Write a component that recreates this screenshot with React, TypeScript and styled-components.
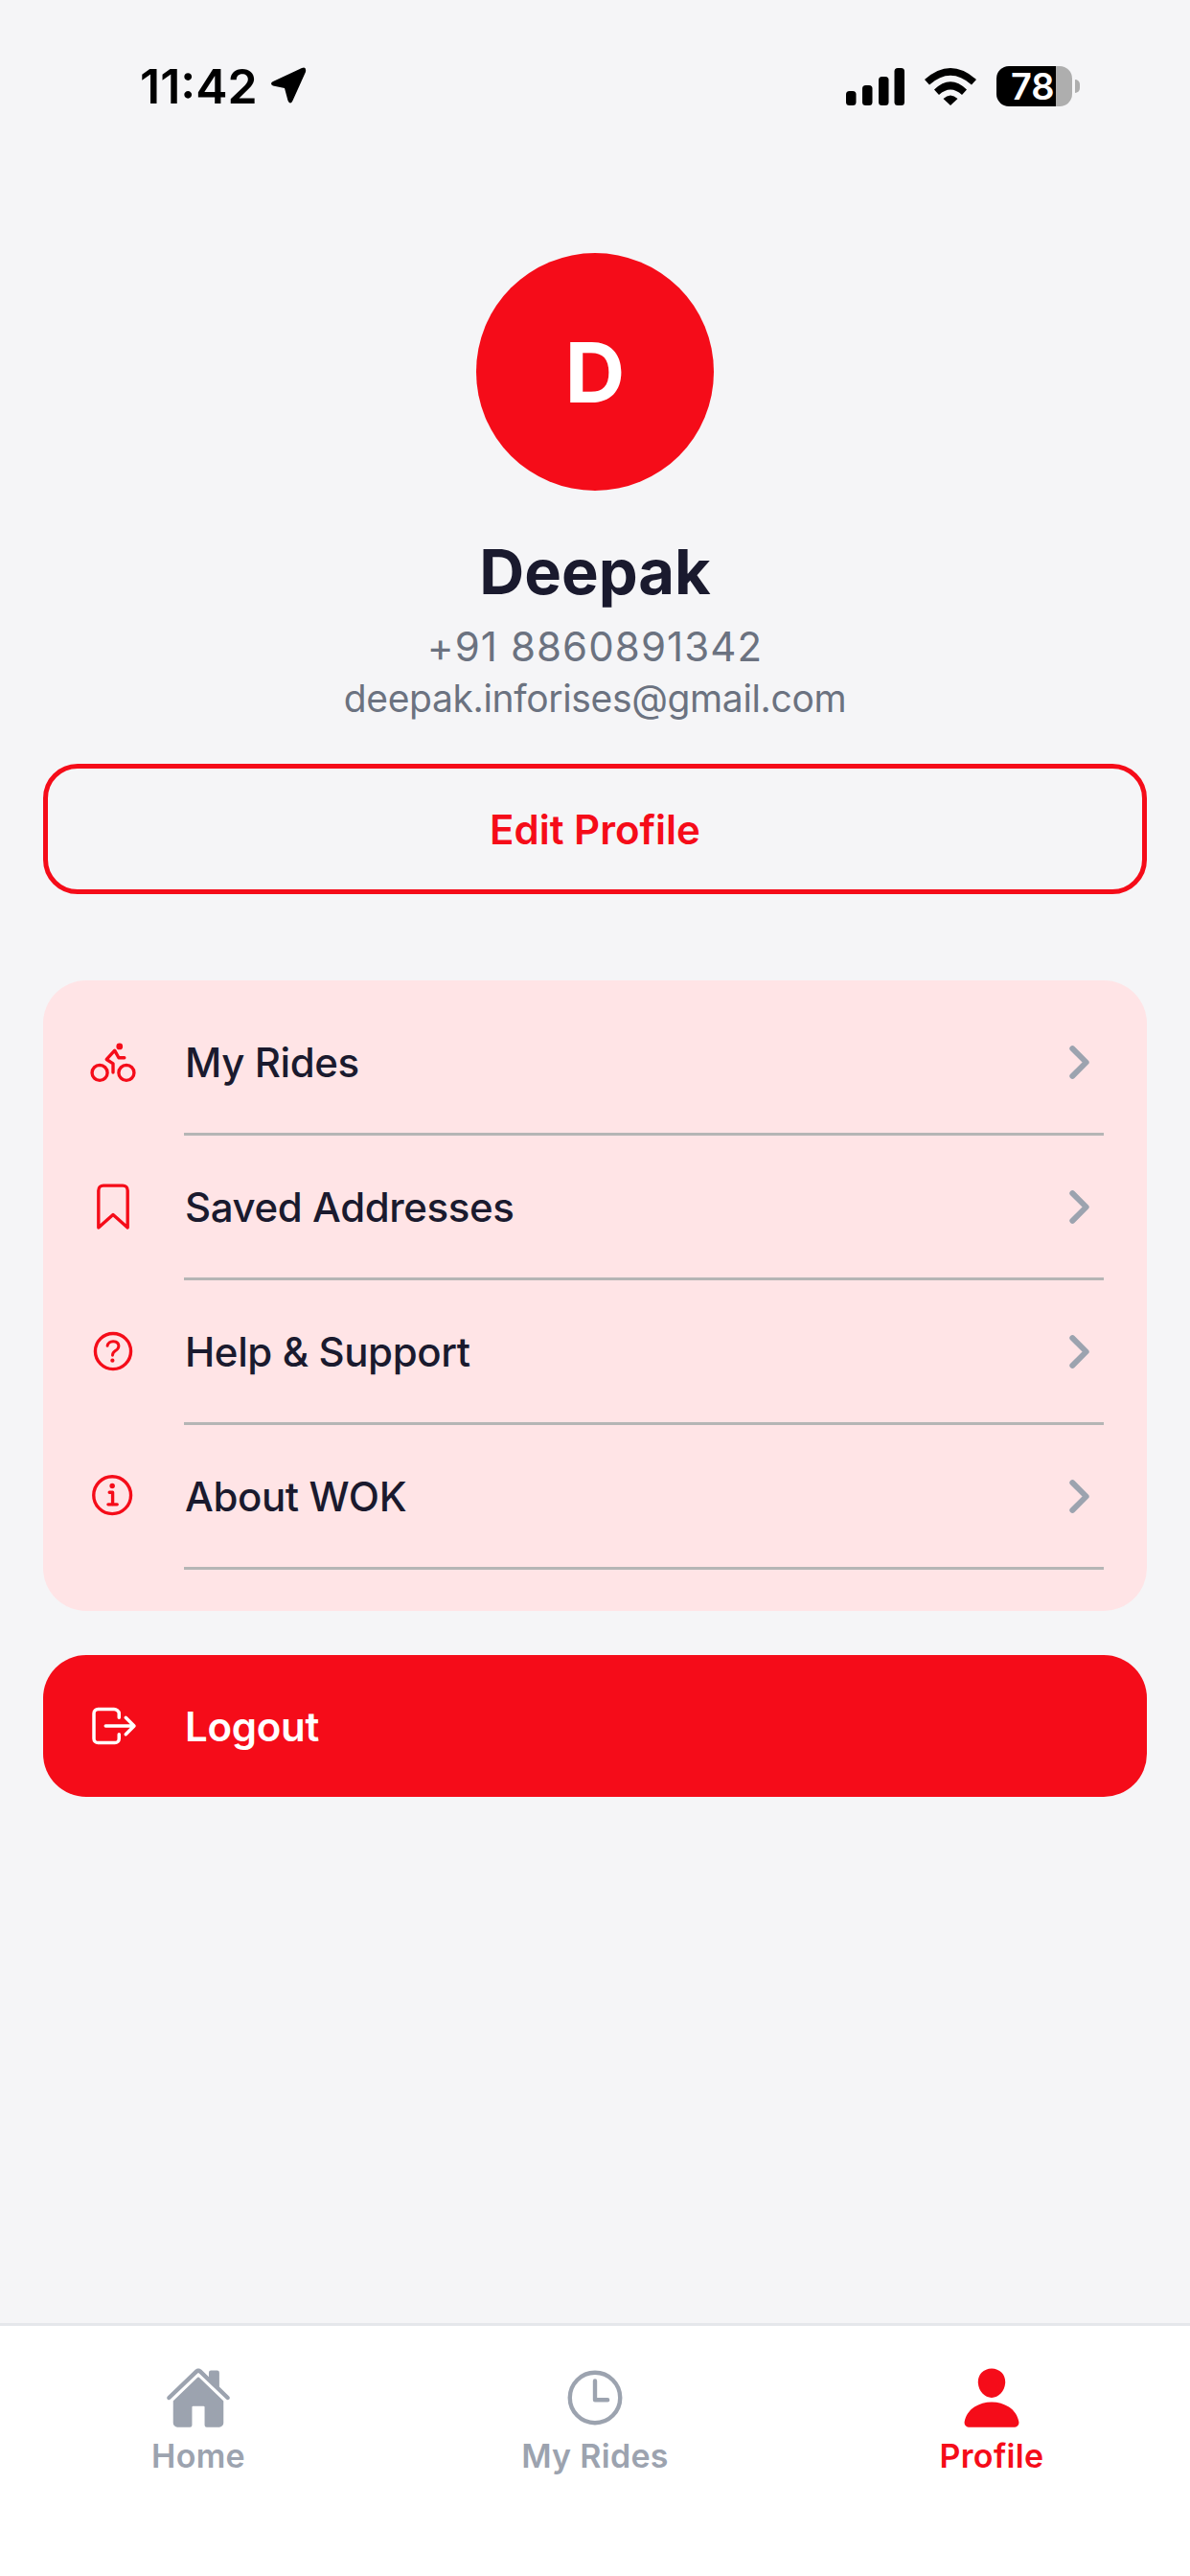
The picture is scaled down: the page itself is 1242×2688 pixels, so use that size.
import styled, { createGlobalStyle } from "styled-components";
import {
  IoBicycleOutline,
  IoBookmarkOutline,
  IoChevronForward,
  IoHelpCircleOutline,
  IoHome,
  IoInformationCircleOutline,
  IoLogOutOutline,
  IoPerson,
  IoTimeOutline,
} from "react-icons/io5";

const RED = "#f50c19";
const INK = "#1a1a2e";

const GlobalStyle = createGlobalStyle`
  html, body {
    margin: 0;
    padding: 0;
    background: #f5f5f7;
    font-family: Inter, "Liberation Sans", sans-serif;
  }
  * { box-sizing: border-box; }
`;

const menuItems = [
  { label: "My Rides", icon: <IoBicycleOutline /> },
  { label: "Saved Addresses", icon: <IoBookmarkOutline /> },
  { label: "Help & Support", icon: <IoHelpCircleOutline /> },
  { label: "About WOK", icon: <IoInformationCircleOutline /> },
];

export default function App() {
  return (
    <Screen>
      <GlobalStyle />
      <StatusBar>
        <TimeGroup>
          <Clock>11:42</Clock>
          <svg width="40" height="42" viewBox="0 0 40 42">
            <path
              d="M3 16 L33 2 Q38 0 37 6 L23.5 36 Q21 41 18.5 36 L15 23 L3 20.5 Q-1 18 3 16 Z"
              fill="#000"
            />
          </svg>
        </TimeGroup>
        <StatusIcons>
          <svg width="61" height="39" viewBox="0 0 61 39">
            <rect x="0" y="24" width="10.5" height="15" rx="3.5" fill="#000" />
            <rect x="17" y="18" width="10.5" height="21" rx="3.5" fill="#000" />
            <rect x="34" y="9" width="10.5" height="30" rx="3.5" fill="#000" />
            <rect x="50.5" y="0" width="10.5" height="39" rx="3.5" fill="#000" />
          </svg>
          <svg width="54" height="40" viewBox="0 0 54 40">
            <path d="M0 13 Q27 -11 54 13 L49 18.5 Q27 -1 5 18.5 Z" fill="#000" />
            <path d="M10 23.5 Q27 7 44 23.5 L39 29 Q27 18 15 29 Z" fill="#000" />
            <path d="M19.5 33 Q27 26 34.5 33 L27 40 Z" fill="#000" />
          </svg>
          <Battery>
            <BatteryBody>78</BatteryBody>
            <BatteryNub />
          </Battery>
        </StatusIcons>
      </StatusBar>

      <Content>
        <ProfileHead>
          <Avatar>D</Avatar>
          <Name>Deepak</Name>
          <Phone>+91 8860891342</Phone>
          <Email>deepak.inforises@gmail.com</Email>
        </ProfileHead>

        <EditButton>Edit Profile</EditButton>

        <MenuCard>
          {menuItems.map((item) => (
            <MenuRow key={item.label}>
              <MenuIcon>{item.icon}</MenuIcon>
              <MenuBody>
                <MenuLabel>{item.label}</MenuLabel>
                <Chevron>
                  <IoChevronForward />
                </Chevron>
              </MenuBody>
            </MenuRow>
          ))}
        </MenuCard>

        <LogoutButton>
          <LogoutIcon>
            <IoLogOutOutline />
          </LogoutIcon>
          <LogoutLabel>Logout</LogoutLabel>
        </LogoutButton>
      </Content>

      <TabBar>
        <Tab>
          <TabIcon>
            <IoHome />
          </TabIcon>
          <TabLabel>Home</TabLabel>
        </Tab>
        <Tab>
          <TabIcon>
            <IoTimeOutline />
          </TabIcon>
          <TabLabel>My Rides</TabLabel>
        </Tab>
        <Tab $active>
          <TabIcon>
            <IoPerson />
          </TabIcon>
          <TabLabel>Profile</TabLabel>
        </Tab>
      </TabBar>
    </Screen>
  );
}

const Screen = styled.div`
  width: 1242px;
  height: 2688px;
  display: flex;
  flex-direction: column;
  background: #f5f5f7;
  overflow: hidden;
`;

const StatusBar = styled.div`
  height: 264px;
  flex: none;
  display: flex;
  justify-content: space-between;
  align-items: flex-start;
  padding: 69px 115px 0 146px;
`;

const TimeGroup = styled.div`
  display: flex;
  align-items: center;
  gap: 13px;
  height: 42px;
`;

const Clock = styled.span`
  font-size: 50px;
  font-weight: 600;
  line-height: 42px;
  color: #000;
`;

const StatusIcons = styled.div`
  display: flex;
  align-items: center;
  gap: 21px;
  height: 42px;
`;

const Battery = styled.div`
  display: flex;
  align-items: center;
  gap: 3px;
`;

const BatteryBody = styled.div`
  width: 79px;
  height: 42px;
  border-radius: 13px;
  background: linear-gradient(90deg, #000 78%, #aeaeae 78%);
  color: #fff;
  font-size: 38px;
  font-weight: 600;
  line-height: 42px;
  padding-left: 15px;
  white-space: nowrap;
`;

const BatteryNub = styled.div`
  width: 5px;
  height: 14px;
  border-radius: 0 7px 7px 0;
  background: #aeaeae;
`;

const Content = styled.div`
  flex: 1;
  display: flex;
  flex-direction: column;
  padding: 0 45px;
`;

const ProfileHead = styled.div`
  display: flex;
  flex-direction: column;
  align-items: center;
`;

const Avatar = styled.div`
  width: 248px;
  height: 248px;
  border-radius: 50%;
  background: ${RED};
  color: #fff;
  display: flex;
  align-items: center;
  justify-content: center;
  font-size: 87px;
  font-weight: 700;
`;

const Name = styled.div`
  margin-top: 45px;
  font-size: 65px;
  line-height: 80px;
  font-weight: 700;
  color: ${INK};
`;

const Phone = styled.div`
  margin-top: 12px;
  font-size: 42px;
  line-height: 52px;
  letter-spacing: 1.1px;
  color: #6b7280;
`;

const Email = styled.div`
  margin-top: 2px;
  font-size: 39px;
  line-height: 52px;
  letter-spacing: -0.35px;
  color: #6b7280;
`;

const EditButton = styled.div`
  margin-top: 42px;
  height: 136px;
  border: 5px solid ${RED};
  border-radius: 36px;
  display: flex;
  align-items: center;
  justify-content: center;
  font-size: 42px;
  font-weight: 600;
  color: ${RED};
`;

const MenuCard = styled.div`
  margin-top: 90px;
  height: 658px;
  padding-top: 11px;
  border-radius: 45px;
  background: #ffe4e6;
`;

const MenuRow = styled.div`
  height: 151px;
  display: flex;
  align-items: stretch;
`;

const MenuIcon = styled.div`
  width: 147px;
  flex: none;
  padding-left: 46px;
  padding-bottom: 3px;
  display: flex;
  align-items: center;
  font-size: 54px;
  color: ${RED};

  svg {
    display: block;
  }
`;

const MenuBody = styled.div`
  flex: 1;
  margin-right: 45px;
  border-bottom: 3px solid #b5b5b5;
  display: flex;
  align-items: center;
  justify-content: space-between;
`;

const MenuLabel = styled.span`
  margin-left: 1px;
  font-size: 42px;
  font-weight: 500;
  letter-spacing: -0.4px;
  color: ${INK};
`;

const Chevron = styled.span`
  display: flex;
  font-size: 51px;
  color: #9ca3af;

  svg path {
    stroke-width: 60px !important;
  }
`;

const LogoutButton = styled.div`
  margin-top: 46px;
  height: 148px;
  border-radius: 45px;
  background: ${RED};
  display: flex;
  align-items: center;
  color: #fff;
`;

const LogoutIcon = styled.span`
  width: 147px;
  flex: none;
  padding-left: 46px;
  display: flex;
  font-size: 56px;
`;

const LogoutLabel = styled.span`
  margin-left: 1px;
  font-size: 42px;
  font-weight: 600;
  letter-spacing: -0.3px;
`;

const TabBar = styled.div`
  height: 264px;
  flex: none;
  background: #fff;
  border-top: 3px solid #e5e7eb;
  display: grid;
  grid-template-columns: repeat(3, 1fr);
`;

const Tab = styled.div<{ $active?: boolean }>`
  display: flex;
  flex-direction: column;
  align-items: center;
  padding-top: 40px;
  color: ${(p) => (p.$active ? RED : "#9ca3af")};
`;

const TabIcon = styled.span`
  display: flex;
  font-size: 70px;
`;

const TabLabel = styled.span`
  margin-top: 6px;
  font-size: 34px;
  line-height: 40px;
  font-weight: 600;
  letter-spacing: 0.3px;
`;
